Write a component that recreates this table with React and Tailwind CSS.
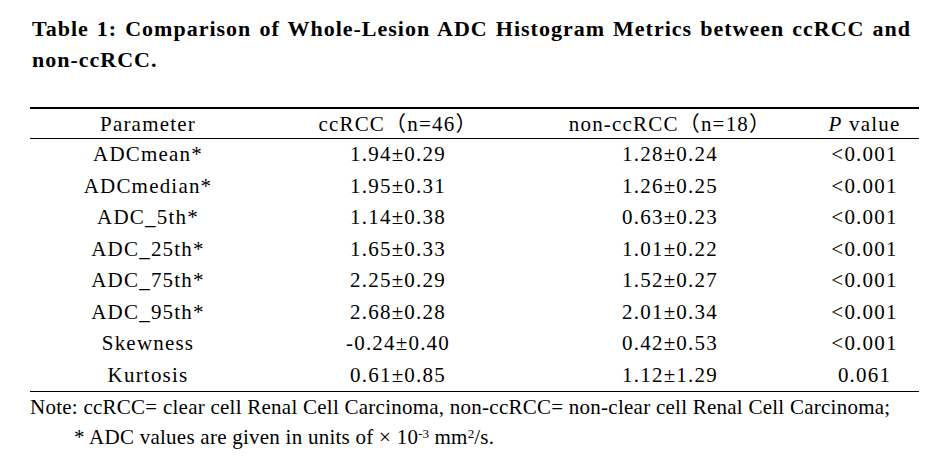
const rows = [
  ['ADCmean*', '1.94±0.29', '1.28±0.24', '<0.001'],
  ['ADCmedian*', '1.95±0.31', '1.26±0.25', '<0.001'],
  ['ADC_5th*', '1.14±0.38', '0.63±0.23', '<0.001'],
  ['ADC_25th*', '1.65±0.33', '1.01±0.22', '<0.001'],
  ['ADC_75th*', '2.25±0.29', '1.52±0.27', '<0.001'],
  ['ADC_95th*', '2.68±0.28', '2.01±0.34', '<0.001'],
  ['Skewness', '-0.24±0.40', '0.42±0.53', '<0.001'],
  ['Kurtosis', '0.61±0.85', '1.12±1.29', '0.061'],
];

const cols = 'grid grid-cols-[236px_264px_280px_109px] text-center';

export default function App(){
  return (
    <div className="w-[942px] h-[476px] bg-white text-black font-['Liberation_Serif','Noto_Sans_CJK_SC',serif]">
      <div className="pt-[13px] pl-[32px] pr-[31px]">
        <h1 className="text-[22px] font-bold leading-[31px] tracking-[1px] text-justify">
          Table 1: Comparison of Whole-Lesion ADC Histogram Metrics between ccRCC and non-ccRCC.
        </h1>
      </div>
      <div className="ml-[30px] w-[889px] mt-[32px]">
        <div className="border-t-2 border-black" />
        <div className={`${cols} h-[30px] items-center text-[21px] tracking-[1.2px] border-b border-black`}>
          <div>Parameter</div>
          <div>ccRCC（n=46）</div>
          <div>non-ccRCC（n=18）</div>
          <div><i>P</i> value</div>
        </div>
        {rows.map((r, i) => (
          <div key={i} className={`${cols} h-[31.5px] items-center text-[21px] tracking-[1.2px]`}>
            {r.map((c, j) => <div key={j}>{c}</div>)}
          </div>
        ))}
        <div className="border-t border-black" />
      </div>
      <div className="pl-[30px] text-[21px] leading-[30px] tracking-[0.25px] whitespace-nowrap">
        <div>Note: ccRCC= clear cell Renal Cell Carcinoma, non-ccRCC= non-clear cell Renal Cell Carcinoma;</div>
        <div className="pl-[44px]">* ADC values are given in units of × 10<sup className="text-[13px] tracking-normal">-3</sup> mm<sup className="text-[13px] tracking-normal">2</sup>/s.</div>
      </div>
    </div>
  );
}
